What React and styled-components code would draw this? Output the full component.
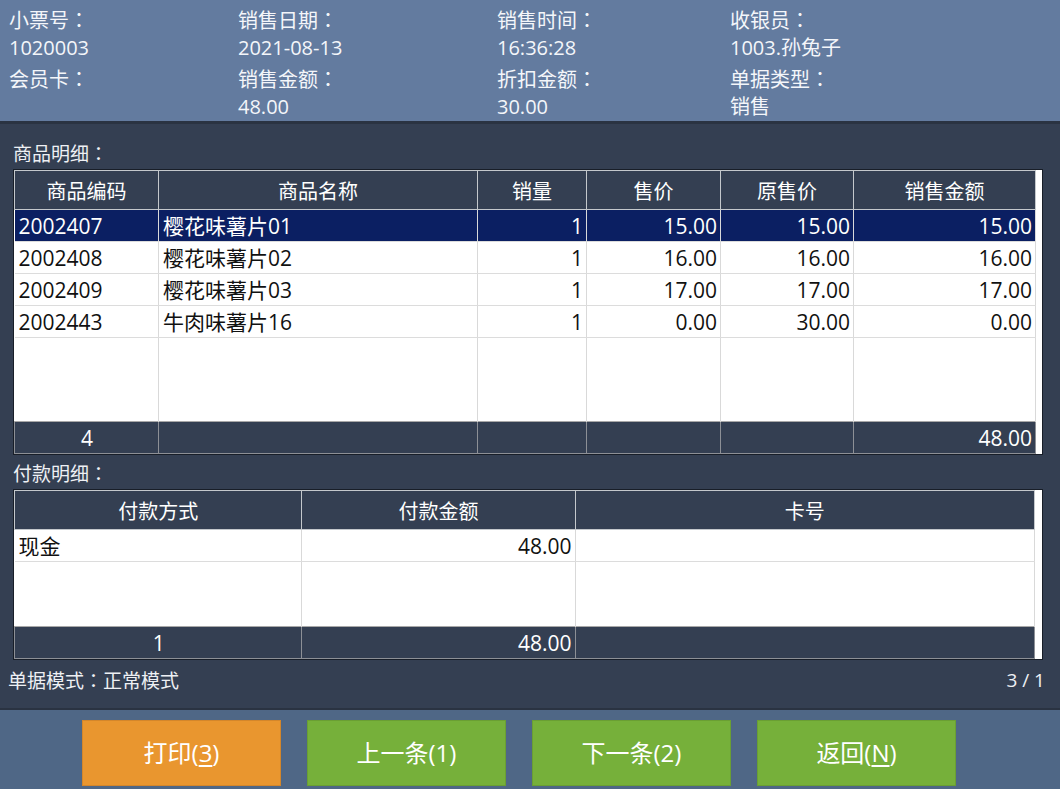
import React from 'react'
import styled, { createGlobalStyle } from 'styled-components'

const GlobalStyle = createGlobalStyle`
  html, body {
    margin: 0;
    padding: 0;
    background: #343f52;
  }
  body {
    font-family: "Open Sans", "Noto Sans CJK SC", sans-serif;
  }
`

const info = [
  { label: '小票号', value: '1020003' },
  { label: '销售日期', value: '2021-08-13' },
  { label: '销售时间', value: '16:36:28' },
  { label: '收银员', value: '1003.孙兔子' },
  { label: '会员卡', value: '' },
  { label: '销售金额', value: '48.00' },
  { label: '折扣金额', value: '30.00' },
  { label: '单据类型', value: '销售' }
]

const goodsCols = [
  { title: '商品编码', width: 144, align: 'left' },
  { title: '商品名称', width: 319, align: 'left' },
  { title: '销量', width: 109, align: 'right' },
  { title: '售价', width: 134, align: 'right' },
  { title: '原售价', width: 133, align: 'right' },
  { title: '销售金额', width: 182, align: 'right' }
]

const goodsRows = [
  ['2002407', '樱花味薯片01', '1', '15.00', '15.00', '15.00'],
  ['2002408', '樱花味薯片02', '1', '16.00', '16.00', '16.00'],
  ['2002409', '樱花味薯片03', '1', '17.00', '17.00', '17.00'],
  ['2002443', '牛肉味薯片16', '1', '0.00', '30.00', '0.00']
]

const goodsFooter = ['4', '', '', '', '', '48.00']

const payCols = [
  { title: '付款方式', width: 287, align: 'left' },
  { title: '付款金额', width: 273, align: 'right' },
  { title: '卡号', width: 459, align: 'left' }
]

const payRows = [['现金', '48.00', '']]
const payFooter = ['1', '48.00', '']

const buttons = [
  { text: '打印(', key: '3', tone: 'orange' },
  { text: '上一条(1)', tone: 'green' },
  { text: '下一条(2)', tone: 'green' },
  { text: '返回(', key: 'N', tone: 'green' }
]

function DataTable({ cols, rows, footer, selected, filler }) {
  return (
    <Frame>
      <Table>
        <colgroup>
          {cols.map((c) => <col key={c.title} style={{ width: c.width }} />)}
        </colgroup>
        <thead>
          <tr>
            {cols.map((c) => <HeadCell key={c.title}>{c.title}</HeadCell>)}
          </tr>
        </thead>
        <tbody>
          {rows.map((row, i) =>
            <BodyRow key={i} $selected={i === selected}>
              {row.map((v, j) => <Cell key={j} $align={cols[j].align}>{v}</Cell>)}
            </BodyRow>
          )}
          <FillerRow $height={filler}>
            {cols.map((c) => <Cell key={c.title} />)}
          </FillerRow>
          <FootRow>
            {footer.map((v, j) =>
              <FootCell key={j} $align={j === 0 ? 'center' : cols[j].align}>{v}</FootCell>
            )}
          </FootRow>
        </tbody>
      </Table>
    </Frame>
  )
}

export default function App() {
  return (
    <Page>
      <GlobalStyle />
      <InfoPanel>
        {info.map((item) =>
          <InfoItem key={item.label}>
            <InfoText>{item.label}<Colon>：</Colon></InfoText>
            <InfoText>{item.value || '\u00a0'}</InfoText>
          </InfoItem>
        )}
      </InfoPanel>
      <Main>
        <SectionTitle>商品明细<Colon>：</Colon></SectionTitle>
        <DataTable cols={goodsCols} rows={goodsRows} footer={goodsFooter} selected={0} filler={84} />
        <SectionTitle $top={5}>付款明细<Colon>：</Colon></SectionTitle>
        <DataTable cols={payCols} rows={payRows} footer={payFooter} filler={65} />
        <StatusRow>
          <span>单据模式<Colon>：</Colon>正常模式</span>
          <span>3 / 1</span>
        </StatusRow>
      </Main>
      <ButtonBar>
        {buttons.map((b) =>
          <ActionButton key={b.text} $tone={b.tone}>
            {b.text}
            {b.key && <><u>{b.key}</u>)</>}
          </ActionButton>
        )}
      </ButtonBar>
    </Page>
  )
}

// STYLES
const Page = styled.div`
  width: 1060px;
  height: 789px;
  display: flex;
  flex-direction: column;
  background: #343f52;
  overflow: hidden;
`

const InfoPanel = styled.div`
  height: 124px;
  box-sizing: border-box;
  padding: 6px 0 0 9px;
  background: #637b9f;
  border-bottom: 3px solid #2a3342;
  display: grid;
  grid-template-columns: 229px 259px 233px 1fr;
  grid-auto-rows: 59px;
  color: #f4f6fa;
`

const InfoItem = styled.div`
  display: flex;
  flex-direction: column;
`

const InfoText = styled.div`
  font-size: 20px;
  line-height: 27px;
  white-space: nowrap;
`

const Colon = styled.span`
  font-family: "Noto Sans CJK TC", sans-serif;
`

const Main = styled.div`
  flex: 1;
  padding: 16px 17px 0 13px;
  display: flex;
  flex-direction: column;
  color: #eef0f4;
`

const SectionTitle = styled.div`
  font-size: 19px;
  line-height: 26px;
  margin-top: ${(p) => p.$top || 0}px;
  margin-bottom: 2px;
`

const Frame = styled.div`
  width: 1030px;
  box-sizing: border-box;
  background: #ffffff;
  border: 1px solid #181e28;
`

const Table = styled.table`
  table-layout: fixed;
  border-collapse: collapse;
  width: 1021px;
  font-size: 21px;
`

const HeadCell = styled.th`
  height: 38px;
  padding: 0;
  background: #343f52;
  color: #ffffff;
  font-weight: normal;
  font-size: 20px;
  text-align: center;
  border: 1px solid #c4c8cc;
`

const BodyRow = styled.tr`
  height: 32px;
  background: ${(p) => (p.$selected ? '#0b1f62' : '#ffffff')};
  color: ${(p) => (p.$selected ? '#ffffff' : '#111111')};
`

const Cell = styled.td`
  padding: 0 3px 0 4px;
  text-align: ${(p) => p.$align};
  white-space: nowrap;
  overflow: hidden;
  border-right: 1px solid #d9d9d9;
  border-bottom: 1px solid #dcdcdc;
  line-height: 30px;
`

const FillerRow = styled.tr`
  height: ${(p) => p.$height}px;
  background: #ffffff;

  td {
    border-bottom: none;
  }
`

const FootRow = styled.tr`
  height: 32px;
  background: #343f52;
  color: #ffffff;
`

const FootCell = styled.td`
  padding: 0 3px 0 4px;
  text-align: ${(p) => p.$align};
  border: 1px solid #8d9096;
  border-top-color: #a8a8a8;
  line-height: 30px;
`

const StatusRow = styled.div`
  margin: 7px 0 0 -5px;
  width: 1037px;
  display: flex;
  justify-content: space-between;
  font-size: 19px;
  line-height: 26px;
`

const ButtonBar = styled.div`
  height: 81px;
  box-sizing: border-box;
  padding: 10px 0 0 82px;
  display: flex;
  gap: 26px;
  align-items: flex-start;
  background: #4f6786;
  border-top: 2px solid #2a3342;
`

const ActionButton = styled.button`
  width: 199px;
  height: 66px;
  padding: 0 0 4px;
  border: 1px solid ${(p) => (p.$tone === 'orange' ? '#d4862a' : '#6a9f33')};
  background: ${(p) => (p.$tone === 'orange' ? '#e9962f' : '#76b03a')};
  color: #ffffff;
  font-family: "Open Sans", "Noto Sans CJK SC", sans-serif;
  font-size: 24px;
  cursor: pointer;

  u {
    text-underline-offset: 3px;
  }
`
